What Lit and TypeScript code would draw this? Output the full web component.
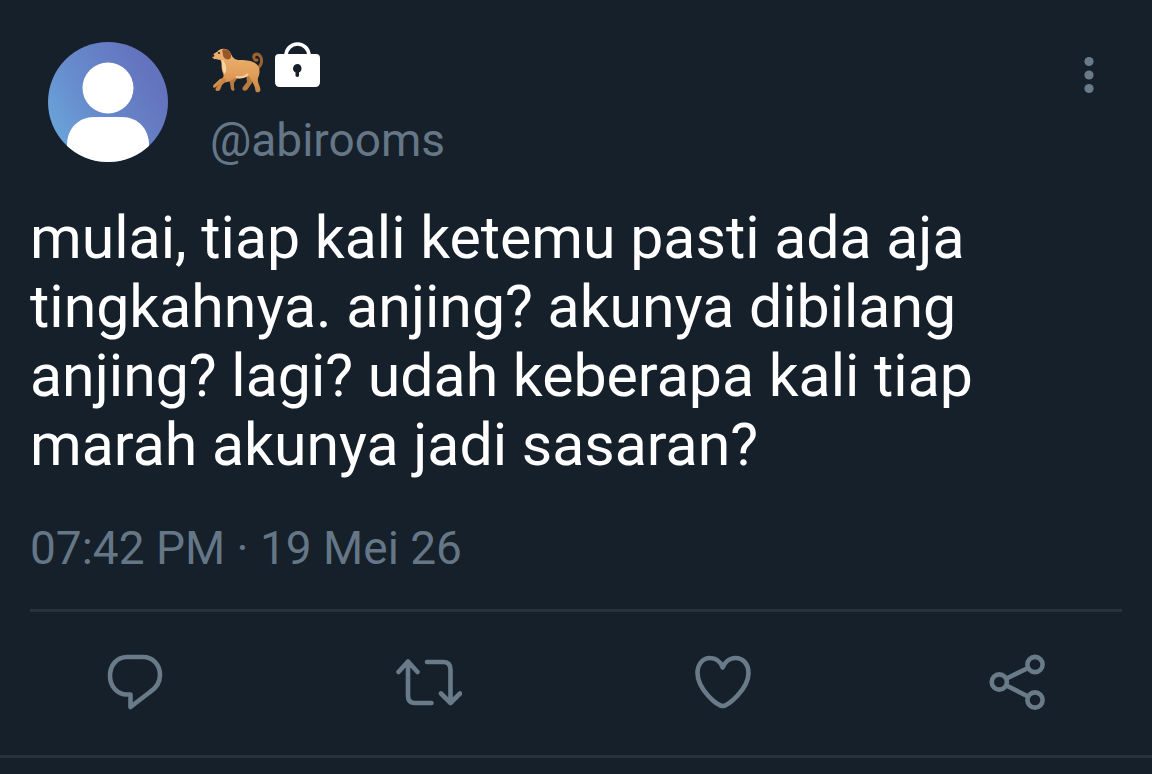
import { LitElement, html, css } from "lit";
import { customElement } from "lit/decorators.js";

@customElement("app-root")
export class AppRoot extends LitElement {
  static styles = css`
    :host {
      display: block;
      min-height: 100vh;
      box-sizing: border-box;
      background: #16202a;
      color: #fff;
      font-family: Roboto, sans-serif;
    }
    .post {
      border-bottom: 3px solid #28323c;
    }
    .head {
      display: flex;
      align-items: flex-start;
      padding: 42px 48px 0;
    }
    .avatar {
      display: block;
      width: 120px;
      height: 120px;
      flex: none;
    }
    .who {
      flex: 1;
      margin-left: 42px;
    }
    .name {
      display: flex;
      gap: 8px;
      height: 56px;
      margin: 0;
    }
    .name svg {
      display: block;
    }
    .handle {
      display: block;
      margin-top: 14px;
      font-size: 46px;
      line-height: 56px;
      color: #657786;
      text-decoration: none;
    }
    button {
      display: block;
      padding: 0;
      border: 0;
      background: none;
      color: #697a89;
      cursor: pointer;
    }
    button svg {
      display: block;
    }
    .more {
      margin-top: 12px;
      margin-right: 6px;
    }
    .body {
      margin: 35px 30px 0;
      font-size: 59px;
      line-height: 69px;
    }
    .time {
      display: block;
      margin: 41px 30px 0;
      font-size: 46px;
      line-height: 56px;
      color: #657786;
    }
    .actions {
      display: flex;
      justify-content: space-between;
      margin: 33px 30px 0;
      padding: 37px 72px 40px;
      border-top: 3px solid #28323c;
    }
    .line {
      fill: none;
      stroke: currentColor;
      stroke-width: 4.6;
      stroke-linecap: round;
      stroke-linejoin: round;
    }
  `;

  render() {
    return html`
      <article class="post">
        <header class="head">
          <svg class="avatar" viewBox="0 0 120 120" role="img" aria-label="Avatar">
            <defs>
              <linearGradient id="sky" x1="0" y1="0.75" x2="0.85" y2="0.25">
                <stop offset="0" stop-color="#69a6da" />
                <stop offset="0.4" stop-color="#678dcd" />
                <stop offset="1" stop-color="#6473be" />
              </linearGradient>
              <clipPath id="disc"><circle cx="60" cy="60" r="60" /></clipPath>
            </defs>
            <circle cx="60" cy="60" r="60" fill="url(#sky)" />
            <g clip-path="url(#disc)" fill="#fff">
              <circle cx="60" cy="46" r="25.5" />
              <path d="M19 120V103C19 86 31 75 46 75H74C90 75 101 87 101 103V120Z" />
            </g>
          </svg>
          <div class="who">
            <h1 class="name">
              <svg width="56" height="56" viewBox="0 0 56 56" role="img" aria-label="Dog">
                <defs>
                  <linearGradient id="coat" x1="0" y1="0" x2="0" y2="1">
                    <stop offset="0" stop-color="#edb476" />
                    <stop offset="0.55" stop-color="#e2a05c" />
                    <stop offset="1" stop-color="#c98443" />
                  </linearGradient>
                </defs>
                <path d="M46 27C51 25 53 19 50.500 14.500C48 10.500 43 12 44 16C44.500 18 45.500 18.500 47 18" fill="none" stroke="#9c622f" stroke-width="3" stroke-linecap="round" />
                <path d="M17 34L20 41L21 47C22 50 26 49 24 46L24 41L28 35Z" fill="#b97a3d" />
                <path d="M36 32L37 40L33 45C31 48 35 50 37 48L42 41L43 32Z" fill="#b97a3d" />
                <path d="M2 14.500C3 11 6 11 8 9C11 6 17 6 20 10C22 14 23 17 28 18C34 18 40 18 45 21C51 25 50 31 48 36C47 40 50 43 50.500 48C50 51 45 51 45.500 48.500C45 44 43 41 39 34C34 36 28 37 25 36C21 39 17 41 12 40.500L8 43C5 47 2 46 3.500 43L10 37C14 36 14 34 13 31C11 27 12 22 11 18.500C9 17 6 18 4 17C3 16 2 15.500 2 14.500Z" fill="url(#coat)" />
                <path d="M17 38L12 43L10 48C8 50 4 49 6 46L9 41L13 36Z" fill="#c98545" />
                <path d="M13 18C17 23 17 29 14.500 32C11.500 27 12.500 22 11.500 18Z" fill="#f6d5a4" />
                <path d="M26 35C31 36 35 35 38 32" fill="none" stroke="#f4d1a1" stroke-width="2" />
                <path d="M13 7.500C18 6.500 21.500 10 21 15C20 18 17 18 15 16.500C12 14 13.500 11 12 9Z" fill="#985729" />
                <circle cx="9" cy="11" r="1.100" fill="#33221a" />
                <circle cx="2.800" cy="13.500" r="1.500" fill="#33221a" />
              </svg>
              <svg width="48" height="48" viewBox="274 42 48 48" role="img" aria-label="Protected account">
                <path d="M286 57V55.500A11.500 11.500 0 0 1 309 55.500V57" fill="none" stroke="#fff" stroke-width="3.600" />
                <path fill="#fff" fill-rule="evenodd" d="M279 54H316Q320 54 320 58V82Q320 87 315 87H280Q275 87 275 82V58Q275 54 279 54ZM297.500 64A4.500 4.500 0 0 0 295.500 72.500V76Q297.500 78 299 76V72.500A4.500 4.500 0 0 0 297.500 64Z" />
              </svg>
            </h1>
            <a class="handle" href="#abirooms">@abirooms</a>
          </div>
          <button class="more" aria-label="More">
            <svg width="18" height="42" viewBox="0 0 18 42" fill="currentColor">
              <circle cx="9" cy="7.500" r="4.600" />
              <circle cx="9" cy="21" r="4.600" />
              <circle cx="9" cy="34.500" r="4.600" />
            </svg>
          </button>
        </header>
        <p class="body">
          mulai, tiap kali ketemu pasti ada aja tingkahnya. anjing? akunya dibilang
          anjing? lagi? udah keberapa kali tiap marah akunya jadi sasaran?
        </p>
        <time class="time">07:42 PM · 19 Mei 26</time>
        <footer class="actions">
          <button aria-label="Reply">
            <svg width="66" height="66" viewBox="102 649 66 66">
              <path class="line" d="M127 657H143C153 657 160 665 160 675C160 682 156 688 150 692L130.500 707V694.500H127C117 694.500 110 686 110 676C110 665 117 657 127 657Z" />
            </svg>
          </button>
          <button aria-label="Repost">
            <svg width="66" height="66" viewBox="396 649 66 66">
              <path class="line" d="M398.500 672L408 661.500L417.500 672M408 662V696Q408 703 415 703H431.500M427 662H443Q450.500 662 450.500 669.500V703M441 693.500L450.500 703L460 693.500" />
            </svg>
          </button>
          <button aria-label="Like">
            <svg width="66" height="66" viewBox="690 649 66 66">
              <path class="line" d="M722.700 706C717 706 697.500 689 697.500 673C697.500 664 703 658 710 658C717 658 721 663 722.700 667.500C724.500 663 729 658 735.500 658C743 658 748.500 664 748.500 673C748.500 689 728 706 722.700 706Z" />
            </svg>
          </button>
          <button aria-label="Share">
            <svg width="66" height="66" viewBox="984 649 66 66">
              <g class="line">
                <circle cx="999.300" cy="682" r="7.600" />
                <circle cx="1035" cy="664.500" r="7.600" />
                <circle cx="1035" cy="700" r="7.600" />
                <path d="M1006.500 678.500L1028 668M1006.500 685.500L1028 696.500" />
              </g>
            </svg>
          </button>
        </footer>
      </article>
    `;
  }
}
